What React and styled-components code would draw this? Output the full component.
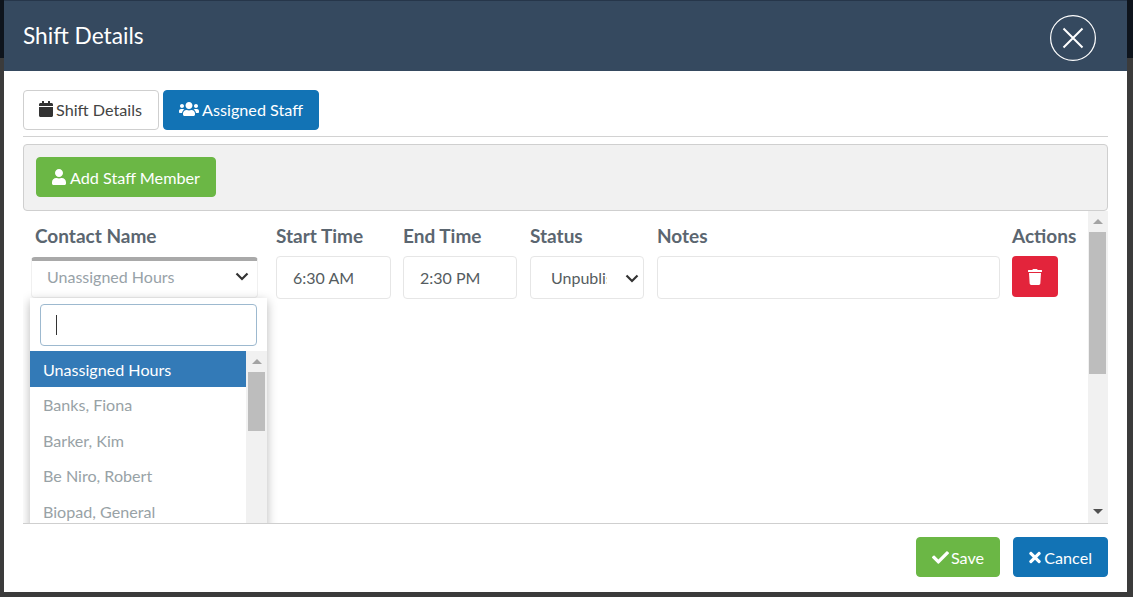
import React from "react";
import styled, { createGlobalStyle } from "styled-components";
import { FaCalendar, FaUsers, FaUser, FaTrash, FaCheck, FaTimes } from "react-icons/fa";

const Global = createGlobalStyle`
  html, body { margin: 0; padding: 0; height: 100%; overflow: hidden; }
  body { font-family: Lato, "Open Sans", sans-serif; background: #3b3b3b; }
`;

const Backdrop = styled.div`
  height: 597px;
  padding: 0 6px 5px 4px;
  box-sizing: border-box;
  background: linear-gradient(#0e141c 0, #0e141c 58px, #3b3b3b 58px);
`;

const Modal = styled.div`
  height: 592px;
  background: #fff;
  display: flex;
  flex-direction: column;
`;

const Header = styled.header`
  height: 71px;
  flex: none;
  box-sizing: border-box;
  background: #35495f;
  border-top: 1px solid #26364a;
  padding: 0 31px 0 19px;
  display: flex;
  align-items: center;
  justify-content: space-between;
`;

const Title = styled.h1`
  margin: 0 0 1px;
  font-size: 22.7px;
  font-weight: 400;
  color: #fff;
`;

const Close = styled.button`
  width: 46px;
  height: 46px;
  padding: 0;
  margin-top: 3px;
  border: none;
  background: none;
  display: block;
`;

const Body = styled.main`
  flex: 1;
  min-height: 0;
  padding: 19px 19px 0;
  display: flex;
  flex-direction: column;
`;

const Tabs = styled.nav`
  display: flex;
  gap: 4px;
  padding-bottom: 6px;
  border-bottom: 1px solid #d2d2d2;
`;

const Btn = styled.button`
  height: 40px;
  box-sizing: border-box;
  padding: 0 ${p => p.$pr || 15}px ${p => p.$lift ? 2 : 0}px 15px;
  border-radius: 4px;
  border: 1px solid ${p => p.$border || p.$bg};
  background: ${p => p.$bg};
  color: ${p => p.$fg || "#fff"};
  font: 400 16.2px Lato, sans-serif;
  display: inline-flex;
  align-items: center;
  justify-content: center;
  gap: ${p => p.$gap || 3}px;
  svg { width: ${p => p.$iw || 14}px; height: ${p => p.$ih || 16}px; flex: none; }
`;

const Well = styled.section`
  flex: none;
  height: 67px;
  margin-top: 7px;
  box-sizing: border-box;
  background: #f1f1f1;
  border: 1px solid #cfcfcf;
  border-radius: 4px;
  padding: 12px;
`;

const Scroller = styled.div`
  flex: 1;
  min-height: 0;
  position: relative;
  overflow: hidden;
  display: flex;
  border-bottom: 1px solid #cfcfcf;
`;

const Content = styled.div`
  flex: 1;
  min-width: 0;
  padding-left: 8px;
  display: grid;
  grid-template-columns: 233px 115px 115px 115px 343px 1fr;
  grid-template-rows: 45px 1fr;
  column-gap: 12px;
`;

const Label = styled.div`
  font-size: 19px;
  font-weight: 700;
  color: #5b6670;
  padding-left: ${p => p.$indent || 0}px;
  line-height: 50px;
  height: 45px;
  white-space: nowrap;
`;

const Cell = styled.div`
  min-width: 0;
`;

const ContactSelect = styled.div`
  width: 227px;
  height: 41px;
  margin-top: 1px;
  box-sizing: border-box;
  border-radius: 4px;
  border: 1px solid #f0f0f0;
  border-top: 4px solid #a9a9a9;
  padding: 0 8px 6px 15px;
  color: #98a2a8;
  font-size: 16px;
  display: flex;
  align-items: center;
  justify-content: space-between;
`;

const Field = styled.input`
  display: block;
  width: ${p => p.$w || 114}px;
  height: 43px;
  box-sizing: border-box;
  border: 1px solid #e6e6e6;
  border-radius: 4px;
  padding: 0 16px;
  font: 400 16px Lato, sans-serif;
  color: #555c60;
  background: #fff;
  outline: none;
`;

const StatusWrap = styled.div`
  position: relative;
  width: 114px;
  svg { position: absolute; right: 5px; top: 18px; pointer-events: none; }
`;

const StatusSelect = styled.select`
  display: block;
  appearance: none;
  width: 114px;
  height: 43px;
  box-sizing: border-box;
  border: 1px solid #e6e6e6;
  border-radius: 4px;
  padding: 0 36px 0 20px;
  font: 400 16px Lato, sans-serif;
  color: #555c60;
  background: #fff;
  outline: none;
`;

const DeleteBtn = styled.button`
  width: 46px;
  height: 41px;
  border: none;
  border-radius: 4px;
  background: #e3243b;
  color: #fff;
  padding: 0;
  display: flex;
  align-items: center;
  justify-content: center;
  font-size: 16px;
`;

const Track = styled.div`
  width: ${p => p.$w}px;
  box-sizing: border-box;
  padding-left: ${p => p.$inset}px;
  flex: none;
  background: #f1f1f1;
  display: flex;
  flex-direction: column;
  align-items: flex-start;
`;

const Arrow = styled.div`
  flex: none;
  width: 17px;
  height: ${p => p.$h}px;
  display: flex;
  align-items: center;
  justify-content: center;
  &::after {
    content: "";
    border-left: 5px solid transparent;
    border-right: 5px solid transparent;
    ${p => p.$down ? "border-top: 5px solid #505050;" : "border-bottom: 5px solid #a3a3a3;"}
  }
`;

const Thumb = styled.div`
  flex: none;
  width: 17px;
  height: ${p => p.$h}px;
  background: #bdbdbd;
`;

const Spacer = styled.div`
  flex: 1;
`;

const Dropdown = styled.div`
  position: absolute;
  left: 7px;
  top: 87px;
  width: 237px;
  height: 240px;
  background: #fff;
  box-shadow: 0 3px 10px rgba(0,0,0,.28);
  display: flex;
  flex-direction: column;
`;

const SearchBox = styled.div`
  margin: 6px 10px 5px;
  height: 42px;
  flex: none;
  box-sizing: border-box;
  border: 1px solid #9db9cf;
  border-radius: 4px;
  padding-left: 15px;
  display: flex;
  align-items: center;
`;

const Caret = styled.span`
  width: 1px;
  height: 20px;
  background: #333;
`;

const DropBody = styled.div`
  flex: 1;
  display: flex;
  min-height: 0;
`;

const Options = styled.ul`
  flex: 1;
  margin: 0;
  padding: 0;
  list-style: none;
`;

const Option = styled.li`
  height: 35.7px;
  box-sizing: border-box;
  padding: ${p => p.$active ? "1px" : "0"} 13px 0;
  display: flex;
  align-items: center;
  font-size: 16.1px;
  background: ${p => p.$active ? "#337ab7" : "transparent"};
  color: ${p => p.$active ? "#fff" : "#98a2a6"};
`;

const Footer = styled.footer`
  flex: none;
  height: 68px;
  padding: 13px 19px 0;
  box-sizing: border-box;
  display: flex;
  justify-content: flex-end;
  gap: 13px;
`;

const Chevron = () => (
  <svg width="14" height="9" viewBox="0 0 14 9" fill="none" stroke="#333" strokeWidth="2.2">
    <path d="M1.5 1.5 L7 7 L12.5 1.5" />
  </svg>
);

const names = ["Unassigned Hours", "Banks, Fiona", "Barker, Kim", "Be Niro, Robert", "Biopad, General"];

export default function App() {
  return (
    <>
      <Global />
      <Backdrop>
        <Modal>
          <Header>
            <Title>Shift Details</Title>
            <Close aria-label="Close">
              <svg width="46" height="46" viewBox="0 0 46 46" fill="none" stroke="#fff">
                <circle cx="23" cy="23" r="22.4" strokeWidth="1.2" />
                <path d="M13.5 13.5 L32.5 32.5 M32.5 13.5 L13.5 32.5" strokeWidth="2" />
              </svg>
            </Close>
          </Header>
          <Body>
            <Tabs>
              <Btn $lift $pr={16} $bg="#fff" $border="#cfcfcf" $fg="#444">
                <FaCalendar color="#333" />Shift Details
              </Btn>
              <Btn $lift $bg="#1273b5" $iw={20}><FaUsers />Assigned Staff</Btn>
            </Tabs>
            <Well>
              <Btn $bg="#6bb745" $gap={4}><FaUser />Add Staff Member</Btn>
            </Well>
            <Scroller>
              <Content>
                <Label $indent={4}>Contact Name</Label>
                <Label>Start Time</Label>
                <Label>End Time</Label>
                <Label>Status</Label>
                <Label>Notes</Label>
                <Label>Actions</Label>
                <Cell>
                  <ContactSelect>
                    Unassigned Hours
                    <Chevron />
                  </ContactSelect>
                </Cell>
                <Cell><Field readOnly value="6:30 AM" $w={115} /></Cell>
                <Cell><Field readOnly value="2:30 PM" /></Cell>
                <Cell>
                  <StatusWrap>
                    <StatusSelect defaultValue="u">
                      <option value="u">Unpublished</option>
                    </StatusSelect>
                    <Chevron />
                  </StatusWrap>
                </Cell>
                <Cell><Field readOnly value="" $w={343} /></Cell>
                <Cell><DeleteBtn aria-label="Delete"><FaTrash /></DeleteBtn></Cell>
              </Content>
              <Track $w={20} $inset={1}>
                <Arrow $h={21} />
                <Thumb $h={142} />
                <Spacer />
                <Arrow $down $h={24} />
              </Track>
              <Dropdown>
                <SearchBox><Caret /></SearchBox>
                <DropBody>
                  <Options>
                    {names.map((n, i) => <Option key={n} $active={i === 0}>{n}</Option>)}
                  </Options>
                  <Track $w={21} $inset={2}>
                    <Arrow $h={21} />
                    <Thumb $h={59} />
                    <Spacer />
                  </Track>
                </DropBody>
              </Dropdown>
            </Scroller>
          </Body>
          <Footer>
            <Btn $bg="#6bb745" $iw={17} $ih={17} $gap={2}><FaCheck />Save</Btn>
            <Btn $bg="#1273b5" $iw={12} $ih={17}><FaTimes />Cancel</Btn>
          </Footer>
        </Modal>
      </Backdrop>
    </>
  );
}
